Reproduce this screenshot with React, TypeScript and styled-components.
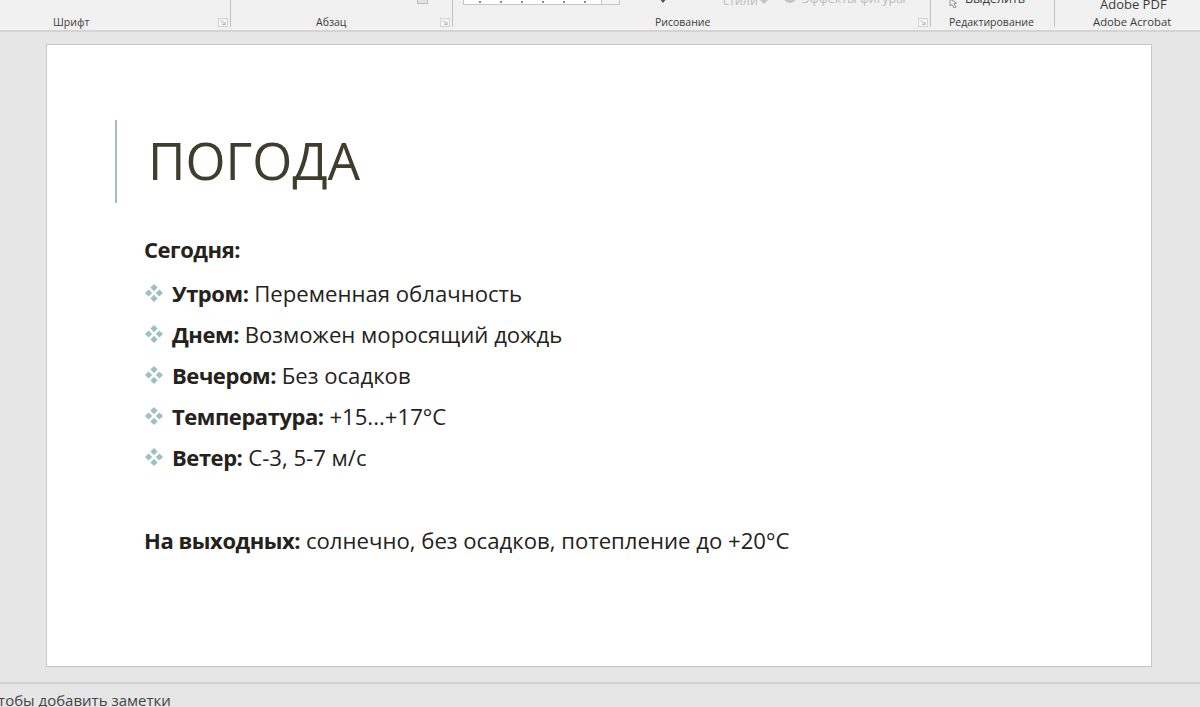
import React from 'react';
import styled, { createGlobalStyle } from 'styled-components';

const GlobalStyle = createGlobalStyle`
  html, body {
    margin: 0;
    padding: 0;
    background: #e6e6e6;
    overflow: hidden;
  }
  * {
    box-sizing: border-box;
  }
`;

const Window = styled.div`
  width: 1200px;
  height: 707px;
  display: flex;
  flex-direction: column;
  overflow: hidden;
  font-family: "Open Sans", "Liberation Sans", sans-serif;
  background: #e6e6e6;
`;

const Ribbon = styled.div`
  flex: 0 0 32px;
  display: grid;
  grid-template-columns: 231px 222px 478px 124px 1fr;
  align-items: start;
  background: #f1f1f1;
  border-bottom: 2px solid #d4d4d4;
`;

const Group = styled.div<{ $last?: boolean }>`
  height: 27px;
  display: flex;
  flex-direction: column;
  border-right: ${(p) => (p.$last ? 'none' : '1px solid #c2c2c2')};
`;

/* what is left of the ribbon controls, cut off by the top of the window */
const Strip = styled.div<{ $pad?: number }>`
  flex: 0 0 11px;
  height: 11px;
  display: flex;
  align-items: flex-end;
  padding-left: ${(p) => p.$pad || 0}px;
  overflow: hidden;
  white-space: nowrap;
`;

const LabelRow = styled.div<{ $pad: number }>`
  flex: 1;
  display: flex;
  align-items: flex-start;
  justify-content: space-between;
  padding: 4px 2px 0 ${(p) => p.$pad}px;
`;

const GroupLabel = styled.div<{ $size?: number }>`
  font-size: ${(p) => p.$size || 10.5}px;
  line-height: 14px;
  color: #3c3c3c;
  white-space: nowrap;
`;

const Launcher = styled.svg`
  width: 10px;
  height: 9px;
  margin-top: 3px;
`;

const Gallery = styled.div`
  flex: 0 0 157px;
  height: 18px;
  margin-bottom: 6px;
  display: flex;
  background: #fff;
  border: 1px solid #c8c8c8;
`;

const GalleryMarks = styled.div`
  flex: 1;
  display: flex;
  align-items: flex-end;
  justify-content: space-around;
  padding: 0 6px 1px;
`;

const GalleryMark = styled.span`
  width: 2px;
  height: 2px;
  background: #888;
`;

const GalleryButton = styled.div`
  width: 18px;
  background: #f4f4f4;
  border-left: 1px solid #c8c8c8;
`;

const SmallBox = styled.div`
  flex: 0 0 11px;
  height: 12px;
  margin-bottom: 7px;
  border: 1px solid #bcbcbc;
  background: #e4e4e4;
`;

const ShapeArrow = styled.svg`
  flex: 0 0 10px;
  height: 6px;
  margin: 0 0 7px 38px;
`;

const StylesText = styled.span`
  margin: 0 0 3px 55px;
  font-size: 12.5px;
  line-height: 14px;
  color: #bdbdbd;
`;

const StylesArrow = styled.svg`
  flex: 0 0 8px;
  height: 4px;
  margin: 0 0 7px 2px;
`;

const EffectsBlob = styled.svg`
  flex: 0 0 14px;
  height: 10px;
  margin: 0 0 6px 15px;
`;

const EffectsText = styled.span`
  margin: 0 0 5px 5px;
  font-size: 12.5px;
  line-height: 14px;
  color: #bdbdbd;
`;

const CursorIcon = styled.svg`
  flex: 0 0 12px;
  height: 9px;
  margin: 0 0 3px 0;
`;

const SelectText = styled.span`
  margin: 0 0 5px 5px;
  font-size: 12.5px;
  line-height: 14px;
  color: #3c3c3c;
`;

const PdfText = styled.span`
  margin-bottom: 0;
  font-size: 13px;
  line-height: 14px;
  color: #3c3c3c;
`;

const Workspace = styled.div`
  flex: 1;
  padding: 12px 48px 0 46px;
`;

const Slide = styled.div`
  height: 623px;
  background: #fff;
  border: 1px solid #c6c6c6;
  padding: 75px 0 0 68px;
`;

const TitleBlock = styled.div`
  height: 83px;
  padding: 0 0 4px 31px;
  border-left: 2px solid #a1bfbd;
  display: flex;
  align-items: center;
`;

const Title = styled.h1`
  margin: 0;
  font-size: 51.5px;
  font-weight: 400;
  line-height: 76px;
  color: #403c2e;
`;

const Body = styled.div`
  margin: 26px 0 0 29px;
  color: #25221b;
  font-size: 22.15px;
`;

const Line = styled.div<{ $gap?: number }>`
  height: 41px;
  line-height: 41px;
  margin-top: ${(p) => p.$gap || 0}px;
  display: flex;
  align-items: center;
  white-space: pre;
`;

const Heading = styled(Line)`
  margin-bottom: 3px;
`;

const Bold = styled.b`
  font-size: 22px;
  font-weight: 700;
  letter-spacing: -0.45px;
`;

const BulletMark = styled.svg`
  flex: 0 0 20px;
  width: 20px;
  height: 20px;
  margin: -2px 8px 0 0;
`;

const NotesBar = styled.div`
  flex: 0 0 25px;
  height: 25px;
  border-top: 2px solid #d2d2d2;
  overflow: hidden;
  font-size: 15px;
  line-height: 32px;
  color: #444;
  white-space: nowrap;
`;

const NotesText = styled.span`
  display: inline-block;
  margin-left: -11px;
`;

const LauncherIcon = () => (
  <Launcher viewBox="0 0 10 9">
    <rect x="0.5" y="0.5" width="9" height="8" fill="#f4f4f4" stroke="#d4d4d4" />
    <path d="M3 2.5 L7 6.5 M7 4 V6.5 H4.5" fill="none" stroke="#b0b0b0" strokeWidth="1" />
  </Launcher>
);

const Bullet = () => (
  <BulletMark viewBox="0 0 20 20">
    <g fill="#9cc0be">
      <polygon points="10,1 13.6,4.6 10,8.2 6.4,4.6" />
      <polygon points="4.6,6.4 8.2,10 4.6,13.6 1,10" />
      <polygon points="15.4,6.4 19,10 15.4,13.6 11.8,10" />
      <polygon points="10,11.8 13.6,15.4 10,19 6.4,15.4" />
    </g>
  </BulletMark>
);

const items = [
  { head: 'Утром:', text: ' Переменная облачность' },
  { head: 'Днем:', text: ' Возможен моросящий дождь' },
  { head: 'Вечером:', text: ' Без осадков' },
  { head: 'Температура:', text: ' +15...+17°C' },
  { head: 'Ветер:', text: ' С-3, 5-7 м/с' },
];

export default function App() {
  return (
    <Window>
      <GlobalStyle />
      <Ribbon>
        <Group>
          <Strip />
          <LabelRow $pad={53}>
            <GroupLabel>Шрифт</GroupLabel>
            <LauncherIcon />
          </LabelRow>
        </Group>
        <Group>
          <Strip $pad={186}>
            <SmallBox />
          </Strip>
          <LabelRow $pad={85}>
            <GroupLabel>Абзац</GroupLabel>
            <LauncherIcon />
          </LabelRow>
        </Group>
        <Group>
          <Strip $pad={10}>
            <Gallery>
              <GalleryMarks>
                {[0, 1, 2, 3, 4, 5].map((n) => (
                  <GalleryMark key={n} />
                ))}
              </GalleryMarks>
              <GalleryButton />
            </Gallery>
            <ShapeArrow viewBox="0 0 10 6">
              <path d="M1 0 H9 L5 5 Z" fill="#555" />
            </ShapeArrow>
            <StylesText>стили</StylesText>
            <StylesArrow viewBox="0 0 8 4">
              <path d="M0 0 H8 L4 4 Z" fill="#c4c4c4" />
            </StylesArrow>
            <EffectsBlob viewBox="0 0 14 10">
              <ellipse cx="7" cy="3" rx="6" ry="5" fill="#c4c4c4" />
            </EffectsBlob>
            <EffectsText>Эффекты фигуры</EffectsText>
          </Strip>
          <LabelRow $pad={202}>
            <GroupLabel>Рисование</GroupLabel>
            <LauncherIcon />
          </LabelRow>
        </Group>
        <Group>
          <Strip $pad={17}>
            <CursorIcon viewBox="0 0 12 9">
              <path d="M2 0 L2 7 L4 5.5 L6 9 L8 8 L6 4.5 L8.5 4 Z" fill="none" stroke="#8a8a8a" strokeWidth="0.9" />
            </CursorIcon>
            <SelectText>Выделить</SelectText>
          </Strip>
          <LabelRow $pad={18}>
            <GroupLabel>Редактирование</GroupLabel>
          </LabelRow>
        </Group>
        <Group $last>
          <Strip $pad={45}>
            <PdfText>Adobe PDF</PdfText>
          </Strip>
          <LabelRow $pad={38}>
            <GroupLabel $size={11.3}>Adobe Acrobat</GroupLabel>
          </LabelRow>
        </Group>
      </Ribbon>
      <Workspace>
        <Slide>
          <TitleBlock>
            <Title>ПОГОДА</Title>
          </TitleBlock>
          <Body>
            <Heading>
              <Bold>Сегодня:</Bold>
            </Heading>
            {items.map((item) => (
              <Line key={item.head}>
                <Bullet />
                <Bold>{item.head}</Bold>
                {item.text}
              </Line>
            ))}
            <Line $gap={42}>
              <Bold>На выходных:</Bold> солнечно, без осадков, потепление до +20°C
            </Line>
          </Body>
        </Slide>
      </Workspace>
      <NotesBar>
        <NotesText>чтобы добавить заметки</NotesText>
      </NotesBar>
    </Window>
  );
}
